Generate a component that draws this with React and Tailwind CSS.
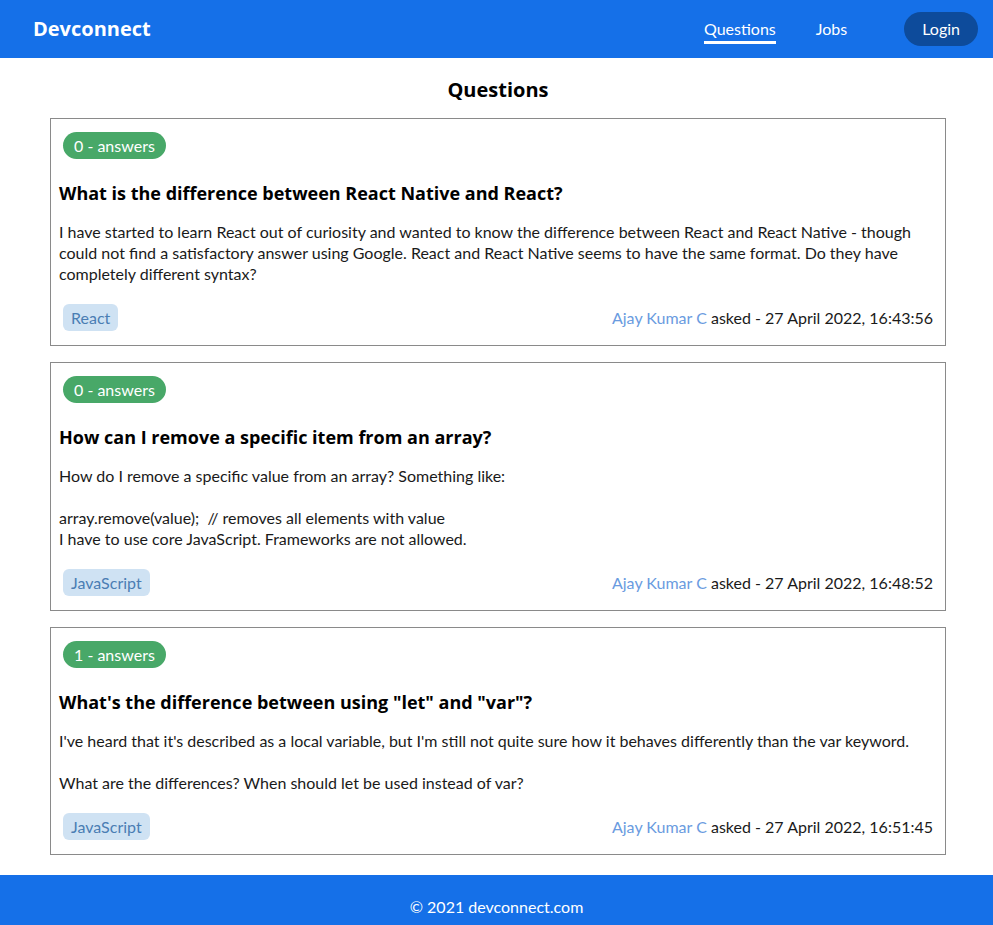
import React from 'react';

const questions = [
  {
    answers: 0,
    title: 'What is the difference between React Native and React?',
    body: 'I have started to learn React out of curiosity and wanted to know the difference between React and React Native - though could not find a satisfactory answer using Google. React and React Native seems to have the same format. Do they have completely different syntax?',
    tag: 'React',
    author: 'Ajay Kumar C',
    date: '27 April 2022, 16:43:56',
  },
  {
    answers: 0,
    title: 'How can I remove a specific item from an array?',
    body: 'How do I remove a specific value from an array? Something like:\n\narray.remove(value);  // removes all elements with value\nI have to use core JavaScript. Frameworks are not allowed.',
    tag: 'JavaScript',
    author: 'Ajay Kumar C',
    date: '27 April 2022, 16:48:52',
  },
  {
    answers: 1,
    title: 'What\'s the difference between using "let" and "var"?',
    body: "I've heard that it's described as a local variable, but I'm still not quite sure how it behaves differently than the var keyword.\n\nWhat are the differences? When should let be used instead of var?",
    tag: 'JavaScript',
    author: 'Ajay Kumar C',
    date: '27 April 2022, 16:51:45',
  },
];

const bold = { fontFamily: '"Open Sans", Lato, sans-serif' };

function QuestionCard({ q }) {
  return (
    <div className="border border-[#8a8a8a] px-2 pt-[9px] pb-[10px]">
      <div className="m-1 inline-flex h-[27px] items-center rounded-full bg-[#48a868] px-[11px] text-base text-white">
        {q.answers} - answers
      </div>
      <h2 className="mt-[18px] text-lg font-bold leading-6 text-black" style={bold}>
        {q.title}
      </h2>
      <p className="mt-4 whitespace-pre-wrap text-base leading-[21px] text-[#1a1a1a]">{q.body}</p>
      <div className="mt-4 flex items-center justify-between">
        <span className="m-1 inline-flex h-[27px] items-center rounded-md bg-[#cfe2f3] px-2 text-base text-[#4a7db3]">
          {q.tag}
        </span>
        <div className="mr-1 text-base text-[#1a1a1a]">
          <span className="text-[#6a9be0]">{q.author}</span> asked - {q.date}
        </div>
      </div>
    </div>
  );
}

export default function App() {
  return (
    <div className="min-h-screen bg-white" style={{ fontFamily: 'Lato, "Open Sans", sans-serif' }}>
      {/* Header */}
      <header className="flex h-[58px] items-center bg-[#1570e8] pl-[33px] pr-[15px]">
        <span className="text-xl font-bold text-white" style={bold}>Devconnect</span>
        <nav className="ml-auto flex items-center">
          <a className="relative text-base text-white">
            Questions
            <span className="absolute -bottom-[3px] left-0 h-[3px] w-full bg-white" />
          </a>
          <a className="ml-10 text-base text-white">Jobs</a>
          <button className="ml-[57px] h-[34px] rounded-full bg-[#0d4b9b] px-[18px] text-base text-white">
            Login
          </button>
        </nav>
      </header>

      {/* Content */}
      <main className="ml-[50px] w-[896px] pb-5">
        <h1 className="pt-[18px] text-center text-xl font-bold leading-7 text-black" style={bold}>
          Questions
        </h1>
        <div className="mt-[14px] flex flex-col gap-4">
          {questions.map((q, i) => (
            <QuestionCard key={i} q={q} />
          ))}
        </div>
      </main>

      {/* Footer */}
      <footer className="flex h-16 items-center justify-center bg-[#1570e8] text-base text-white">
        © 2021 devconnect.com
      </footer>
    </div>
  );
}
